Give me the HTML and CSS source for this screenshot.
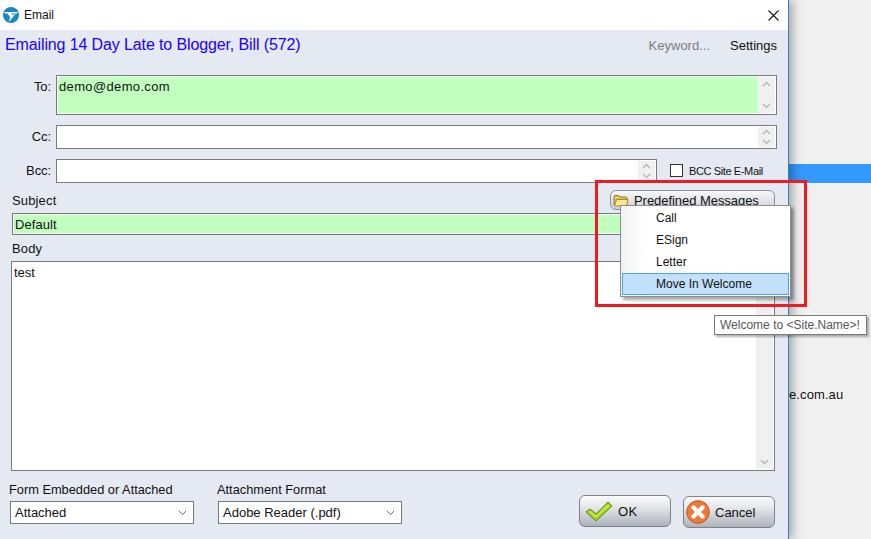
FILE: index.html
```html
<!DOCTYPE html>
<html lang="en">
<head>
<meta charset="utf-8">
<title>Email</title>
<link rel="stylesheet" href="styles.css">
</head>
<body>
<div class="desktop">
  <main class="window">
    <header class="titlebar">
      <svg class="logo" viewBox="0 0 16 16" aria-hidden="true">
        <circle cx="8" cy="8" r="8" fill="#1a87c4"/>
        <path d="M1 5H15L14 6.500H8.500L10 8.500L11.200 6.900H12.400L6 15L7 10L4.500 6.500H2Z" fill="#fff"/>
      </svg>
      <span class="titlebar-text">Email</span>
      <svg class="close" viewBox="0 0 11 11" aria-hidden="true"><path d="M0.5 0.5L10.5 10.5M10.5 0.5L0.5 10.5" stroke="#111" stroke-width="1.1" fill="none"/></svg>
    </header>
    <div class="content">
      <div class="heading-row">
        <h1 class="heading">Emailing 14 Day Late to Blogger, Bill (572)</h1>
        <span class="link muted">Keyword...</span>
        <span class="link">Settings</span>
      </div>
      <div class="field-row to-row">
        <label class="field-label">To:</label>
        <div class="box tall green">
          <div class="box-text">demo@demo.com</div>
          <div class="scroll"><svg class="up" viewBox="0 0 9 6"><path d="M1 5L4.500 1.500L8 5" /></svg><svg class="down" viewBox="0 0 9 6"><path d="M1 1L4.500 4.500L8 1"/></svg></div>
        </div>
      </div>
      <div class="field-row cc-row">
        <label class="field-label">Cc:</label>
        <div class="box short">
          <div class="box-text"></div>
          <div class="scroll"><svg class="up" viewBox="0 0 9 6"><path d="M1 5L4.500 1.500L8 5" /></svg><svg class="down" viewBox="0 0 9 6"><path d="M1 1L4.500 4.500L8 1"/></svg></div>
        </div>
      </div>
      <div class="field-row bcc-row">
        <label class="field-label">Bcc:</label>
        <div class="box short bcc-box">
          <div class="box-text"></div>
          <div class="scroll"><svg class="up" viewBox="0 0 9 6"><path d="M1 5L4.500 1.500L8 5" /></svg><svg class="down" viewBox="0 0 9 6"><path d="M1 1L4.500 4.500L8 1"/></svg></div>
        </div>
        <span class="checkbox"></span>
        <span class="check-label">BCC Site E-Mail</span>
      </div>
      <div class="subject-head">
        <span class="plain-label">Subject</span>
        <div class="predefined">
          <svg class="folder" viewBox="0 0 16 13" aria-hidden="true">
            <path d="M1 11.500V2.500Q1 1.500 2 1.500H5.500L7 3H13Q14 3 14 4V11.500Z" fill="#e8c64e" stroke="#8d7a2c" stroke-width="1"/>
            <path d="M1.500 12L3.500 5.500H15L13.500 12Z" fill="#fbe792" stroke="#a58e32" stroke-width="1"/>
          </svg>
          <span>Predefined Messages</span>
        </div>
      </div>
      <div class="subject-field">Default</div>
      <div class="plain-label body-label">Body</div>
      <div class="body-box">
        <div class="body-text">test</div>
        <div class="body-scroll"><svg class="down" viewBox="0 0 9 6"><path d="M1 1L4.500 4.500L8 1"/></svg></div>
      </div>
      <div class="footer">
        <div class="select-group first">
          <div class="plain-label">Form Embedded or Attached</div>
          <div class="select"><span>Attached</span><svg viewBox="0 0 9 6"><path d="M1 1L4.500 4.500L8 1"/></svg></div>
        </div>
        <div class="select-group">
          <div class="plain-label">Attachment Format</div>
          <div class="select"><span>Adobe Reader (.pdf)</span><svg viewBox="0 0 9 6"><path d="M1 1L4.500 4.500L8 1"/></svg></div>
        </div>
        <div class="button ok">
          <svg class="ok-icon" viewBox="0 0 28 21" aria-hidden="true">
            <path d="M1 11L5 8L11 13L23 1L27 5L11 20Z" fill="#9ccb1c" stroke="#5b8c12" stroke-width="1"/>
            <path d="M3 11L5 9.500L11 14.500L23 3L25 5L11 17Z" fill="#c4e648"/>
          </svg>
          <span>OK</span>
        </div>
        <div class="button cancel">
          <svg class="cancel-icon" viewBox="0 0 24 24" aria-hidden="true">
            <circle cx="12" cy="12" r="11.300" fill="#ee7a3a" stroke="#c2521d" stroke-width="1"/>
            <path d="M7.500 7.500L16.500 16.500M16.500 7.500L7.500 16.500" stroke="#fff" stroke-width="4.200" stroke-linecap="round"/>
          </svg>
          <span>Cancel</span>
        </div>
      </div>
    </div>
  </main>
  <aside class="backdrop">
    <div class="backdrop-bar"></div>
    <div class="backdrop-text">e.com.au</div>
  </aside>

  <div class="highlight"></div>
  <ul class="menu">
    <li class="menu-item">Call</li>
    <li class="menu-item">ESign</li>
    <li class="menu-item">Letter</li>
    <li class="menu-item active">Move In Welcome</li>
  </ul>
  <div class="tooltip">Welcome to &lt;Site.Name&gt;!</div>
</div>
</body>
</html>
```

FILE: styles.css
```css
* { box-sizing: border-box; }
html, body { margin: 0; padding: 0; height: 100%; overflow: hidden; }
body { font-family: "Liberation Sans", Arial, sans-serif; font-size: 13px; color: #111; background: #f0f0f0; }

.desktop { position: relative; display: flex; width: 871px; height: 539px; overflow: hidden; }

.window { width: 789px; height: 539px; flex: none; background: #e5e9f1; border-right: 1px solid #2f82c8; box-shadow: 3px 0 10px rgba(0,0,0,.35); position: relative; z-index: 1; }

.titlebar { height: 30px; background: #fff; display: flex; align-items: center; padding: 0 10px 0 3px; }
.logo { width: 16px; height: 16px; margin-right: 5px; }
.titlebar-text { font-size: 12px; flex: 1; }
.close { width: 11px; height: 11px; margin-right: -1px; }

.heading-row { display: flex; align-items: center; height: 30px; padding: 0 11px 0 5px; }
.heading { flex: 1; margin: 0; font-size: 16px; font-weight: 400; color: #1b00ff; letter-spacing: -.12px; }
.link { font-size: 13px; margin-left: 20px; }
.muted { color: #7d7d7d; }

.field-row { display: flex; align-items: flex-start; }
.field-label { width: 51px; text-align: right; margin-right: 5px; line-height: 22px; flex: none; padding-top: 1px; letter-spacing: -.1px; }
.to-row { margin-top: 15px; }
.cc-row { margin-top: 10px; }
.bcc-row { margin-top: 10px; }

.box { border: 1px solid #7a7a7a; background: #fff; display: flex; padding: 1px; width: 721px; }
.box.tall { height: 40px; }
.box.short { height: 24px; }
.green .box-text { background: #c1ffbe; }
.box-text { flex: 1; padding: 2px 1px; line-height: 16px; font-size: 13px; letter-spacing: .35px; }
.bcc-box { width: 601px; }
.scroll { width: 17px; background: #f0f0f0; display: flex; flex-direction: column; justify-content: space-between; align-items: center; padding: 2px 0; }
.scroll svg, .body-scroll svg { width: 9px; height: 6px; margin: 2px 0; }
.scroll path, .body-scroll path, .select path { fill: none; stroke: #b9b9b9; stroke-width: 1.500; }
.short .scroll svg { margin: 0; }

.checkbox { width: 13px; height: 13px; border: 1px solid #333; background: #fff; margin: 5px 6px 0 13px; flex: none; }
.check-label { font-size: 11px; line-height: 24px; letter-spacing: -.38px; }

.subject-head { display: flex; justify-content: space-between; align-items: flex-start; padding: 7px 13px 0 12px; height: 30px; }
.plain-label { font-size: 13px; line-height: 20px; letter-spacing: .15px; padding-top: 1px; }
.predefined { width: 165px; height: 20px; margin-left: auto; border: 1px solid #8a8f98; border-radius: 6px; background: linear-gradient(#f7f8fa, #ced2da); display: flex; align-items: center; padding-left: 2px; gap: 5px; font-size: 13px; letter-spacing: -.05px; }
.folder { width: 16px; height: 13px; flex: none; }
.subject-field { margin: 0 13px 0 12px; height: 22px; border: 1px solid #7a7a7a; line-height: 21px; font-size: 13px; background: #c1ffbe; box-shadow: inset 0 0 0 1px #fff; padding-left: 2px; letter-spacing: .05px; }
.body-label { margin: 3px 0 0 12px; }
.body-box { margin: 2px 13px 0 11px; height: 210px; border: 1px solid #7a7a7a; background: #fff; display: flex; padding-bottom: 1px; }
.body-text { flex: 1; padding: 3px 2px; line-height: 16px; }
.body-scroll { width: 17px; margin-right: 1px; background: #f0f0f0; display: flex; flex-direction: column; justify-content: flex-end; align-items: center; padding-bottom: 2px; }

.footer { display: flex; align-items: flex-start; margin-top: 8px; padding: 0 13px 0 10px; }
.footer .plain-label { font-size: 12.800px; line-height: 22px; letter-spacing: 0; padding-top: 0; margin-left: -1px; }
.select-group { width: 184px; margin-right: 24px; flex: none; }
.select { height: 23px; width: 184px; border: 1px solid #7a7a7a; background: #fff; display: flex; align-items: center; justify-content: space-between; padding: 0 6px 0 4px; font-size: 13px; margin-left: 0; }
.select svg { width: 9px; height: 6px; }
.select path { stroke: #666; stroke-width: 1; }
.button { width: 92px; height: 32px; border: 1px solid #7f8389; border-radius: 6px; background: linear-gradient(#fafbfc 0%, #e5e7ea 35%, #aeb3bb 100%); display: flex; align-items: center; font-size: 13px; flex: none; }
.ok { margin: 16px 12px 0 auto; padding-left: 5px; gap: 5px; letter-spacing: .3px; }
.cancel { margin-top: 17px; padding-left: 2px; gap: 5px; }
.ok-icon { width: 28px; height: 21px; flex: none; }
.cancel-icon { width: 24px; height: 24px; flex: none; }

.backdrop { flex: 1; padding-top: 164px; background: #f0f0f0; }
.backdrop-bar { height: 19px; background: #3399ff; }
.backdrop-text { margin-top: 204px; font-size: 13px; line-height: 16px; letter-spacing: .1px; }

.highlight { position: absolute; left: 595px; top: 180px; width: 212px; height: 127px; border: 3px solid #ed1c24; z-index: 2; }
.menu { position: absolute; left: 620px; top: 205px; width: 171px; height: 92px; margin: 0; padding: 1px; list-style: none; border: 1px solid #8e8e8e; background: linear-gradient(90deg, #f1f1f1 0, #fff 24px); box-shadow: 3px 3px 3px rgba(0,0,0,.35); z-index: 3; font-size: 12px; }
.menu-item { height: 22px; line-height: 20px; padding-left: 33px; border: 1px solid transparent; }
.menu-item.active { background: #c2dffc; border-color: #4aa4ef; }
.tooltip { position: absolute; left: 714px; top: 315px; width: 153px; height: 20px; border: 1px solid #7b7b7b; background: #fff; box-shadow: 2px 2px 2px rgba(0,0,0,.3); color: #575757; font-size: 12px; line-height: 18px; padding-left: 5px; z-index: 3; }
```
